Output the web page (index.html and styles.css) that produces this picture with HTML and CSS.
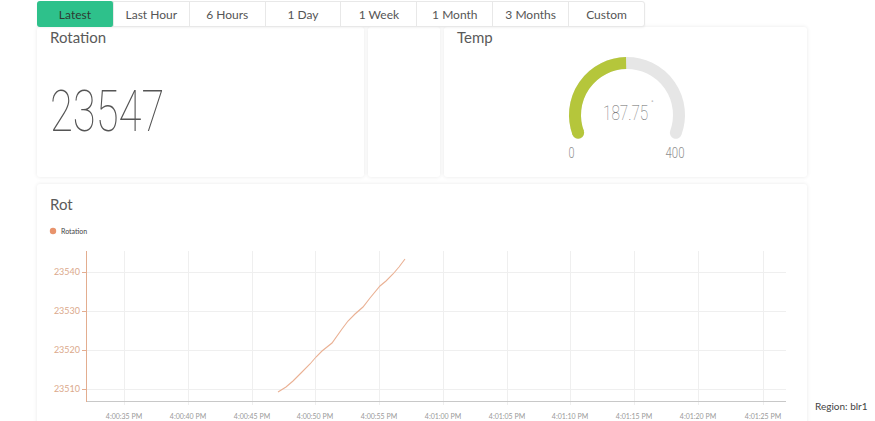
FILE: index.html
```html
<!DOCTYPE html>
<html lang="en">
<head>
    <meta charset="UTF-8">
    <meta name="viewport" content="width=device-width, initial-scale=1.0">
    <title>Dashboard</title>
    <link rel="stylesheet" href="styles.css">
</head>
<body>
    <div class="page">
        <!-- Intervalos -->
        <div class="tabs">
            <div class="tab active">Latest</div>
            <div class="tab">Last Hour</div>
            <div class="tab">6 Hours</div>
            <div class="tab">1 Day</div>
            <div class="tab">1 Week</div>
            <div class="tab">1 Month</div>
            <div class="tab">3 Months</div>
            <div class="tab">Custom</div>
        </div>

        <!-- Widgets -->
        <div class="cards-row">
            <div class="card card-value">
                <div class="card-title">Rotation</div>
                <div class="big-value"><span>23547</span></div>
            </div>
            <div class="card card-empty"></div>
            <div class="card card-gauge">
                <div class="card-title">Temp</div>
                <div class="gauge-wrap">
                    <svg class="gauge" width="140" height="110" viewBox="0 0 140 110">
                        <path d="M21.14 81.78 A52 52 0 1 1 118.86 81.78" fill="none" stroke="#e6e6e6" stroke-width="12" stroke-linecap="round"/>
                        <path d="M21.14 81.78 A52 52 0 0 1 69.1 12.01" fill="none" stroke="#b5c63b" stroke-width="12"/>
                        <circle cx="21.14" cy="81.78" r="6" fill="#b5c63b"/>
                        <text class="gauge-value" transform="translate(46 69) scale(0.73 1)">187.75<tspan class="gauge-unit" dx="4" dy="-15">°</tspan></text>
                        <text x="14.5" y="107" text-anchor="middle" class="gauge-label" textLength="6" lengthAdjust="spacingAndGlyphs">0</text>
                        <text x="118" y="107" text-anchor="middle" class="gauge-label" textLength="19" lengthAdjust="spacingAndGlyphs">400</text>
                    </svg>
                </div>
            </div>
        </div>

        <!-- Gráfico -->
        <div class="bottom-row">
            <div class="card card-chart">
                <div class="card-title">Rot</div>
                <svg class="chart" width="770" height="210" viewBox="0 0 770 210">
                    <circle cx="16" cy="10" r="3.2" fill="#e8936c"/>
                    <text x="24" y="13" class="legend">Rotation</text>

                    <g stroke="#efefef" stroke-width="1">
                        <line x1="49" y1="51.5" x2="749" y2="51.5"/>
                        <line x1="49" y1="90.5" x2="749" y2="90.5"/>
                        <line x1="49" y1="129.5" x2="749" y2="129.5"/>
                        <line x1="49" y1="168.5" x2="749" y2="168.5"/>
                        <line x1="87.5" y1="30" x2="87.5" y2="184"/>
                        <line x1="151.5" y1="30" x2="151.5" y2="184"/>
                        <line x1="215.5" y1="30" x2="215.5" y2="184"/>
                        <line x1="278.5" y1="30" x2="278.5" y2="184"/>
                        <line x1="342.5" y1="30" x2="342.5" y2="184"/>
                        <line x1="406.5" y1="30" x2="406.5" y2="184"/>
                        <line x1="470.5" y1="30" x2="470.5" y2="184"/>
                        <line x1="533.5" y1="30" x2="533.5" y2="184"/>
                        <line x1="597.5" y1="30" x2="597.5" y2="184"/>
                        <line x1="661.5" y1="30" x2="661.5" y2="184"/>
                        <line x1="726.5" y1="30" x2="726.5" y2="184"/>
                    </g>

                    <line x1="49" y1="180.5" x2="749" y2="180.5" stroke="#c8c8c8"/>
                    <g stroke="#e3ad8f">
                        <line x1="49.5" y1="30" x2="49.5" y2="181"/>
                        <line x1="45" y1="51.5" x2="49" y2="51.5"/>
                        <line x1="45" y1="90.5" x2="49" y2="90.5"/>
                        <line x1="45" y1="129.5" x2="49" y2="129.5"/>
                        <line x1="45" y1="168.5" x2="49" y2="168.5"/>
                    </g>

                    <g class="y-labels" text-anchor="end">
                        <text x="43" y="54">23540</text>
                        <text x="43" y="93">23530</text>
                        <text x="43" y="132">23520</text>
                        <text x="43" y="171">23510</text>
                    </g>

                    <g class="x-labels" text-anchor="middle">
                        <text x="87" y="198">4:00:35 PM</text>
                        <text x="151" y="198">4:00:40 PM</text>
                        <text x="215" y="198">4:00:45 PM</text>
                        <text x="278" y="198">4:00:50 PM</text>
                        <text x="342" y="198">4:00:55 PM</text>
                        <text x="406" y="198">4:01:00 PM</text>
                        <text x="470" y="198">4:01:05 PM</text>
                        <text x="533" y="198">4:01:10 PM</text>
                        <text x="597" y="198">4:01:15 PM</text>
                        <text x="661" y="198">4:01:20 PM</text>
                        <text x="726" y="198">4:01:25 PM</text>
                    </g>

                    <polyline fill="none" stroke="#eab194" stroke-width="1.1"
                        points="241,171 249,166 256,160 264,152 273,143 279,136 285,130 295,122 305,108 311,100 318,93 326,86 333,77 343,65 349,60 356,53 362,46 368,38"/>
                </svg>
            </div>
            <div class="side">
                <div class="region">Region: blr1</div>
            </div>
        </div>
    </div>
</body>
</html>
```

FILE: styles.css
```css
/* Layout principal */
html, body {
    height: 100%;
    overflow: hidden;
}
body {
    margin: 0;
    background: #fff;
    font-family: Lato, "Open Sans", sans-serif;
    color: #555;
}
.page {
    padding: 1px 0 0 37px;
}

/* Abas de intervalo */
.tabs {
    display: flex;
    width: 608px;
    height: 26px;
    border: 1px solid #e8e8e8;
    border-radius: 3px;
    box-sizing: border-box;
    background: #fff;
    box-shadow: 0 1px 2px rgba(0, 0, 0, 0.05);
    position: relative;
    z-index: 1;
}
.tab {
    width: 76px;
    display: flex;
    align-items: center;
    justify-content: center;
    font-size: 12px;
    color: #555;
    border-right: 1px solid #e8e8e8;
}
.tab:last-child {
    border-right: none;
}
.tab.active {
    background: #2ec18b;
    color: #2f3b33;
    border-radius: 3px;
    margin: -1px 0 -1px -1px;
    width: 77px;
}

/* Cartões */
.card {
    background: #fff;
    border-radius: 3px;
    box-shadow: 0 0 4px rgba(0, 0, 0, 0.09);
    box-sizing: border-box;
}
.card-title {
    font-size: 15px;
    line-height: 18px;
    color: #5a5a5a;
    padding: 1px 13px 0;
}
.cards-row {
    display: flex;
    gap: 4px;
    height: 150px;
}
.card-value {
    width: 327px;
}
.big-value {
    margin-top: 36px;
    padding-left: 13px;
    height: 58px;
}
.big-value span {
    display: inline-block;
    font-family: Roboto, sans-serif;
    font-weight: 100;
    font-size: 58px;
    line-height: 58px;
    color: #555;
    transform: scaleX(0.72);
    transform-origin: left center;
}
.card-empty {
    width: 72px;
}
.card-gauge {
    width: 363px;
}
.gauge-wrap {
    display: flex;
    justify-content: center;
    padding-left: 3px;
    margin-top: 5px;
}
.gauge-value {
    font-family: Roboto, sans-serif;
    font-weight: 100;
    font-size: 21px;
    fill: #6a6a6a;
}
.gauge-unit {
    font-weight: 400;
    font-size: 8px;
    fill: #999;
}
.gauge-label {
    font-family: Roboto, sans-serif;
    font-weight: 300;
    font-size: 14px;
    fill: #8f8f8f;
}

/* Gráfico */
.bottom-row {
    display: flex;
    gap: 8px;
    margin-top: 7px;
}
.card-chart {
    width: 770px;
    height: 250px;
    padding-top: 10px;
}
.chart {
    display: block;
    margin-top: 8px;
}
.legend {
    font-size: 7px;
    fill: #444;
}
.y-labels text {
    font-size: 9px;
    fill: #dba98c;
}
.x-labels text {
    font-size: 7px;
    fill: #999;
}
.side {
    padding-top: 216px;
}
.region {
    font-size: 10px;
    color: #444;
}
```
